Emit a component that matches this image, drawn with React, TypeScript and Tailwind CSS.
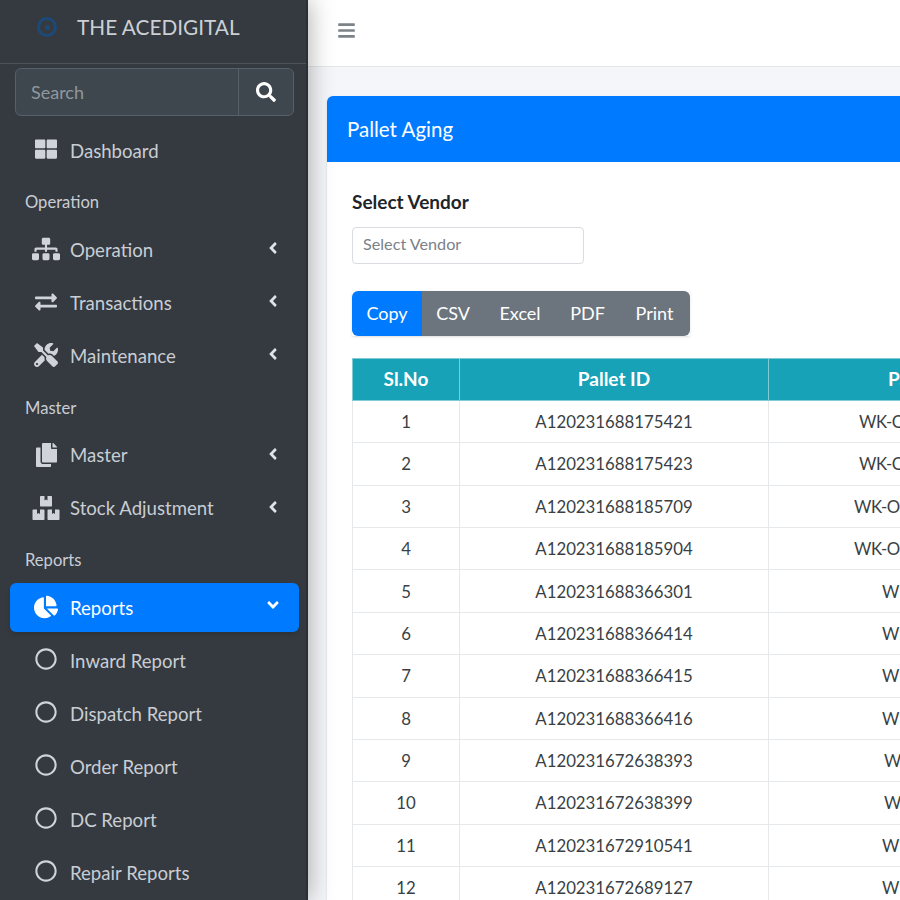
import type { ReactNode } from "react";
import {
  FaAngleDown,
  FaAngleLeft,
  FaBars,
  FaBoxes,
  FaChartPie,
  FaCopy,
  FaExchangeAlt,
  FaRegCircle,
  FaSearch,
  FaSitemap,
  FaThLarge,
  FaTools,
} from "react-icons/fa";

const rows = [
  { id: "A120231688175421", part: "WK-C", pad: "pl-[90px]" },
  { id: "A120231688175423", part: "WK-C", pad: "pl-[90px]" },
  { id: "A120231688185709", part: "WK-O", pad: "pl-[85px]" },
  { id: "A120231688185904", part: "WK-O", pad: "pl-[85px]" },
  { id: "A120231688366301", part: "WK", pad: "pl-[113px]" },
  { id: "A120231688366414", part: "WK", pad: "pl-[113px]" },
  { id: "A120231688366415", part: "WK", pad: "pl-[113px]" },
  { id: "A120231688366416", part: "WK", pad: "pl-[113px]" },
  { id: "A120231672638393", part: "WI", pad: "pl-[115px]" },
  { id: "A120231672638399", part: "WI", pad: "pl-[115px]" },
  { id: "A120231672910541", part: "WK", pad: "pl-[113px]" },
  { id: "A120231672689127", part: "WK", pad: "pl-[113px]" },
];

const NavItem = ({ icon, label, arrow = true }: { icon: ReactNode; label: string; arrow?: boolean }) => (
  <div className="h-[49px] mb-1 ml-[10px] mr-[7px] flex items-center text-[#c9cdd4] text-[18.6px]">
    <span className="w-[60px] pl-[12px] flex justify-center text-[#d0d4da]">{icon}</span>
    <span className="flex-1 pt-[3px]">{label}</span>
    {arrow && <FaAngleLeft className="w-[16px] h-[18px] mr-[18px] -mt-[2px] text-[#dfe2e6]" />}
  </div>
);

const NavHeader = ({ label }: { label: string }) => (
  <div className="h-[46.4px] pl-[25px] pt-[2px] flex items-center text-[16.6px] text-[#c9cdd4]">{label}</div>
);

const Sidebar = () => (
  <aside className="relative z-10 w-[308px] shrink-0 h-full overflow-hidden bg-[#343a40] border-r-2 border-[#2b3035] shadow-[0_0_24px_rgba(0,0,0,0.35)]">
    <div className="h-[64px] border-b border-[#4b545c] flex items-center pl-[37px] pb-[9px]">
      <span className="w-[20px] h-[20px] rounded-full border-[3px] border-[#1c4a78] flex items-center justify-center">
        <span className="w-[5px] h-[5px] rounded-full bg-[#1c4a78]" />
      </span>
      <span className="ml-[20px] text-[20.8px] text-[#ccd0d6]">THE ACEDIGITAL</span>
    </div>
    <div className="ml-[15px] mr-[12px] mt-[4px] mb-[9.5px] h-[48px] flex rounded-md bg-[#3f474e] border border-[#56606a]">
      <div className="flex-1 pl-[15px] flex items-center text-[18px] text-[#8f979e]">Search</div>
      <div className="w-[55px] border-l border-[#56606a] flex items-center justify-center">
        <FaSearch className="w-[20px] h-[20px] text-white" />
      </div>
    </div>
    <NavItem icon={<FaThLarge className="w-[24px] h-[22px] -mt-[2px]" />} label="Dashboard" arrow={false} />
    <NavHeader label="Operation" />
    <NavItem icon={<FaSitemap className="w-[28px] h-[24px]" />} label="Operation" />
    <NavItem icon={<FaExchangeAlt className="w-[24px] h-[22px]" />} label="Transactions" />
    <NavItem icon={<FaTools className="w-[24px] h-[24px]" />} label="Maintenance" />
    <NavHeader label="Master" />
    <NavItem icon={<FaCopy className="w-[21px] h-[24px]" />} label="Master" />
    <NavItem icon={<FaBoxes className="w-[28px] h-[24px]" />} label="Stock Adjustment" />
    <NavHeader label="Reports" />
    <div className="h-[49px] mb-1 ml-[10px] mr-[7px] rounded-md bg-[#007bff] flex items-center text-white text-[18.6px] shadow-md">
      <span className="w-[60px] pl-[12px] flex justify-center">
        <FaChartPie className="w-[24px] h-[24px]" />
      </span>
      <span className="flex-1 pt-[3px]">Reports</span>
      <FaAngleDown className="w-[18px] h-[18px] mr-[17px] -mt-1" />
    </div>
    {["Inward Report", "Dispatch Report", "Order Report", "DC Report", "Repair Reports"].map((r) => (
      <NavItem key={r} icon={<FaRegCircle className="w-[22px] h-[22px] -mt-[2px]" />} label={r} arrow={false} />
    ))}
  </aside>
);

const buttons = [
  { label: "Copy", cls: "w-[70px] bg-[#007bff] rounded-l-md" },
  { label: "CSV", cls: "w-[62px] bg-[#6c757d]" },
  { label: "Excel", cls: "w-[72px] bg-[#6c757d]" },
  { label: "PDF", cls: "w-[63px] bg-[#6c757d]" },
  { label: "Print", cls: "w-[71px] bg-[#6c757d] rounded-r-md" },
];

export default function App() {
  return (
    <div className="flex w-[900px] h-[900px] overflow-hidden bg-[#f4f6f9] font-['Lato','Noto_Sans',sans-serif]">
      <Sidebar />
      <main className="flex-1 min-w-0 overflow-hidden">
        <div className="h-[67px] bg-white border-b border-[#e4e7ea] flex items-center pl-[30px] pb-[6px]">
          <FaBars className="w-[17px] h-[19px] text-[#7b8288]" />
        </div>
        <section className="ml-[19px] mt-[29px] w-[900px] rounded-t-md bg-white shadow-sm">
          <div className="h-[66px] rounded-t-md bg-[#007bff] flex items-center pl-[20px] text-[20.5px] text-white">
            Pallet Aging
          </div>
          <div className="pl-[25px] pt-[27px]">
            <div className="h-[26px] flex items-center text-[19px] font-bold text-[#212529]">Select Vendor</div>
            <div className="mt-[12px] w-[232px] h-[37px] rounded-[4px] border border-[#d9dde1] flex items-center pl-[10px] pb-[2px] text-[16.2px] text-[#7b8288]">
              Select Vendor
            </div>
            <div className="mt-[27px] flex h-[45px] w-fit shadow-sm">
              {buttons.map((b) => (
                <div key={b.label} className={`${b.cls} flex items-center justify-center text-white text-[18px]`}>
                  {b.label}
                </div>
              ))}
            </div>
            <table className="mt-[22px] w-[900px] table-fixed border-collapse text-[16.8px] text-[#3a3f44]">
              <colgroup>
                <col className="w-[107px]" />
                <col className="w-[309px]" />
                <col />
              </colgroup>
              <thead>
                <tr className="h-[42px] bg-[#17a2b8] text-white text-[19px]">
                  <th className="border border-[#7fcbd6] font-bold">Sl.No</th>
                  <th className="border border-[#7fcbd6] font-bold">Pallet ID</th>
                  <th className="border border-[#7fcbd6] font-bold text-left pl-[119px]">Pa</th>
                </tr>
              </thead>
              <tbody>
                {rows.map((row, i) => (
                  <tr key={row.id} className="h-[42.36px]">
                    <td className="border border-[#e6e9ec] text-center">{i + 1}</td>
                    <td className="border border-[#e6e9ec] text-center">{row.id}</td>
                    <td className={`border border-[#e6e9ec] text-left tracking-[-0.5px] ${row.pad}`}>{row.part}</td>
                  </tr>
                ))}
              </tbody>
            </table>
          </div>
        </section>
      </main>
    </div>
  );
}
